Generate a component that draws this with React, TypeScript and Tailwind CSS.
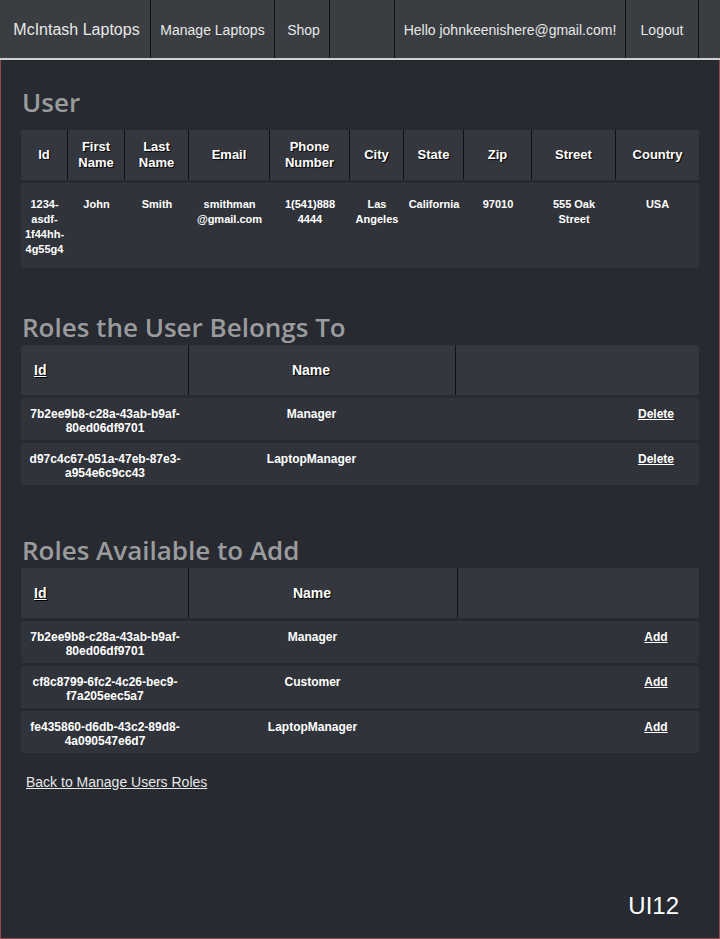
import React from "react";

const userCols = [
  { label: "Id", w: "w-[47px]" },
  { label: "First Name", w: "w-[57px]" },
  { label: "Last Name", w: "w-[64px]" },
  { label: "Email", w: "w-[81px]" },
  { label: "Phone Number", w: "w-[80px]" },
  { label: "City", w: "w-[54px]" },
  { label: "State", w: "w-[60px]" },
  { label: "Zip", w: "w-[68px]" },
  { label: "Street", w: "w-[84px]" },
  { label: "Country", w: "w-[83px]" },
];

const userData = [
  ["1234-", "asdf-", "1f44hh-", "4g55g4"],
  ["John"],
  ["Smith"],
  ["smithman", "@gmail.com"],
  ["1(541)888", "4444"],
  ["Las", "Angeles"],
  ["California"],
  ["97010"],
  ["555 Oak", "Street"],
  ["USA"],
];

const memberRoles = [
  { id: ["7b2ee9b8-c28a-43ab-b9af-", "80ed06df9701"], name: "Manager" },
  { id: ["d97c4c67-051a-47eb-87e3-", "a954e6c9cc43"], name: "LaptopManager" },
];

const availableRoles = [
  { id: ["7b2ee9b8-c28a-43ab-b9af-", "80ed06df9701"], name: "Manager" },
  { id: ["cf8c8799-6fc2-4c26-bec9-", "f7a205eec5a7"], name: "Customer" },
  { id: ["fe435860-d6db-43c2-89d8-", "4a090547e6d7"], name: "LaptopManager" },
];

const shadow = "[text-shadow:1px_1px_1px_#000]";

const Heading = ({ children }: { children: React.ReactNode }) => (
  <h2 className="m-0 px-[21px] font-['Open_Sans',sans-serif] text-[26px] font-semibold leading-[36px] text-[#9a9b9d]">
    {children}
  </h2>
);

const RolesTable = ({
  rows,
  action,
  nameCol,
}: {
  rows: { id: string[]; name: string }[];
  action: string;
  nameCol: string;
}) => (
  <div className="mx-[20px] flex flex-col gap-[3px]">
    <div className="flex h-[50px] bg-[#34373d] text-[14px] font-bold text-white">
      <div className={`flex w-[168px] items-center border-r border-[#111] pl-[13px] ${shadow}`}>
        <span className="underline">Id</span>
      </div>
      <div className={`flex ${nameCol} items-center justify-center border-r border-[#111] pr-[22px] ${shadow}`}>
        Name
      </div>
      <div className="flex-1" />
    </div>
    {rows.map((r, i) => (
      <div key={i} className="flex h-[42px] bg-[#303339] pt-[9px] text-[12px] font-bold leading-[14px] text-white">
        <div className="w-[168px] text-center">
          {r.id.map((l, j) => (
            <div key={j}>{l}</div>
          ))}
        </div>
        <div className={`${nameCol} pr-[22px] text-center`}>{r.name}</div>
        <div className="flex-1" />
        <div className="w-[86px] text-center">
          <span className="underline">{action}</span>
        </div>
      </div>
    ))}
  </div>
);

export default function App() {
  return (
    <div className="flex min-h-[939px] flex-col bg-[#272a30] font-['Liberation_Sans',Arial,sans-serif]">
      <nav className="flex h-[60px] border-b-2 border-[#cfd0d2] bg-[#3a3d41] text-[#e8e8e8]">
        <div className="flex w-[151px] items-center justify-center border-r border-[#111] pl-[3px] pt-[2px] text-[16px]">
          McIntash Laptops
        </div>
        <div className="flex w-[124px] items-center justify-center border-r border-[#111] pt-[2px] text-[14px]">
          Manage Laptops
        </div>
        <div className="flex w-[55px] items-center justify-center border-r border-[#111] pl-[3px] pt-[2px] text-[14px]">
          Shop
        </div>
        <div className="w-[65px] border-r border-[#111]" />
        <div className="flex w-[231px] items-center justify-center border-r border-[#111] pt-[2px] text-[14px]">
          Hello johnkeenishere@gmail.com!
        </div>
        <div className="flex w-[73px] items-center justify-center border-r border-[#111] pt-[2px] text-[14px]">
          Logout
        </div>
        <div className="flex-1" />
      </nav>

      <main className="flex flex-1 flex-col border-x border-b border-[#8e4b4b] pt-[24px]">
        <Heading>User</Heading>
        <div className="mx-[20px] mt-[10px] flex flex-col gap-[3px]">
          <div className="flex h-[50px] bg-[#34373d] text-[13px] font-bold leading-[16px] text-white">
            {userCols.map((c, i) => (
              <div
                key={c.label}
                className={`flex ${c.w} items-center justify-center text-center ${shadow} ${
                  i < userCols.length - 1 ? "border-r border-[#111]" : ""
                }`}
              >
                {c.label}
              </div>
            ))}
          </div>
          <div className="flex h-[85px] bg-[#303339] pt-[14px] text-[11px] font-bold leading-[15px] text-white">
            {userCols.map((c, i) => (
              <div key={c.label} className={`${c.w} text-center`}>
                {userData[i].map((l, j) => (
                  <div key={j}>{l}</div>
                ))}
              </div>
            ))}
          </div>
        </div>

        <div className="mt-[41px]">
          <Heading>Roles the User Belongs To</Heading>
        </div>
        <div className="mt-0">
          <RolesTable rows={memberRoles} action="Delete" nameCol="w-[267px]" />
        </div>

        <div className="mt-[47px]">
          <Heading>Roles Available to Add</Heading>
        </div>
        <div className="mt-0">
          <RolesTable rows={availableRoles} action="Add" nameCol="w-[269px]" />
        </div>

        <a href="#" className="mx-[25px] mt-[19px] self-start text-[14px] text-[#e8e8e8] underline">
          Back to Manage Users Roles
        </a>

        <div className="mt-auto self-end pb-[14px] pr-[40px] text-[24px] text-white">UI12</div>
      </main>
    </div>
  );
}
